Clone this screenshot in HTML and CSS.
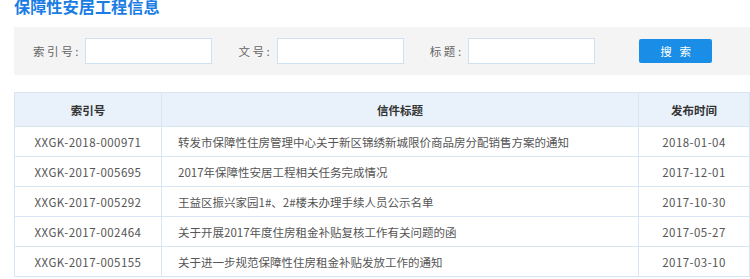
FILE: index.html
```html
<!DOCTYPE html>
<html lang="zh-CN">
<head>
  <meta charset="UTF-8" />
  <title>保障性安居工程信息</title>
  <link rel="stylesheet" href="styles.css">
</head>
<body>
  <div class="page">
    <h1 class="page-title">保障性安居工程信息</h1>

    <!-- 搜索栏 -->
    <form class="search-bar">
      <label class="search-label">索 引 号 :</label>
      <input type="text" class="search-input" />
      <label class="search-label gap">文 号 :</label>
      <input type="text" class="search-input" />
      <label class="search-label gap">标 题 :</label>
      <input type="text" class="search-input" />
      <button type="button" class="search-btn">搜&nbsp;&nbsp;&nbsp;索</button>
    </form>

    <table class="info-table">
      <thead>
        <tr>
          <th class="col-index">索引号</th>
          <th class="col-title">信件标题</th>
          <th class="col-date">发布时间</th>
        </tr>
      </thead>
      <tbody>
        <tr>
          <td class="col-index">XXGK-2018-000971</td>
          <td class="col-title">转发市保障性住房管理中心关于新区锦绣新城限价商品房分配销售方案的通知</td>
          <td class="col-date">2018-01-04</td>
        </tr>
        <tr>
          <td class="col-index">XXGK-2017-005695</td>
          <td class="col-title">2017年保障性安居工程相关任务完成情况</td>
          <td class="col-date">2017-12-01</td>
        </tr>
        <tr>
          <td class="col-index">XXGK-2017-005292</td>
          <td class="col-title">王益区振兴家园1#、2#楼未办理手续人员公示名单</td>
          <td class="col-date">2017-10-30</td>
        </tr>
        <tr>
          <td class="col-index">XXGK-2017-002464</td>
          <td class="col-title">关于开展2017年度住房租金补贴复核工作有关问题的函</td>
          <td class="col-date">2017-05-27</td>
        </tr>
        <tr>
          <td class="col-index">XXGK-2017-005155</td>
          <td class="col-title">关于进一步规范保障性住房租金补贴发放工作的通知</td>
          <td class="col-date">2017-03-10</td>
        </tr>
      </tbody>
    </table>
  </div>
</body>
</html>
```

FILE: styles.css
```css
body {
  margin: 0;
  font-family: "Noto Sans CJK SC", "Noto Sans", sans-serif;
  font-size: 11.5px;
  color: #555;
  background: #fff;
  overflow: hidden;
}
.page {
  padding-left: 14px;
  width: 736px;
}
.page-title {
  margin: -4px 0 0 0;
  height: 31px;
  line-height: 20px;
  font-size: 16.2px;
  font-weight: bold;
  color: #1a7de4;
}
.search-bar {
  display: flex;
  align-items: center;
  height: 48px;
  margin: 0;
  padding-left: 19px;
  background: #f4f4f4;
}
.search-label {
  color: #666;
  margin-right: 7px;
  white-space: pre;
}
.search-label.gap {
  margin-left: 26px;
}
.search-input {
  box-sizing: border-box;
  width: 127px;
  height: 26px;
  margin: 0;
  border: 1px solid #cfe0f0;
  background: #fff;
}
.search-btn {
  margin-left: 44px;
  width: 73px;
  height: 24px;
  border: none;
  border-radius: 2px;
  background: #1a8de6;
  color: #fff;
  font-family: inherit;
  font-size: 11.5px;
  cursor: pointer;
}
.info-table {
  margin-top: 17px;
  width: 736px;
  border-collapse: collapse;
  table-layout: fixed;
}
.info-table th,
.info-table td {
  border: 1px solid #d8e6f3;
  padding: 0;
}
.info-table th {
  height: 33px;
  background: #e9f2fa;
  color: #333;
  font-weight: bold;
}
.info-table td {
  height: 29px;
}
.col-index {
  width: 146px;
  text-align: center;
}
.info-table td.col-index,
.info-table td.col-date {
  letter-spacing: 0.45px;
}
.info-table td.col-title {
  text-align: left;
  padding-left: 16px;
}
.col-date {
  width: 110px;
  text-align: center;
}
```
